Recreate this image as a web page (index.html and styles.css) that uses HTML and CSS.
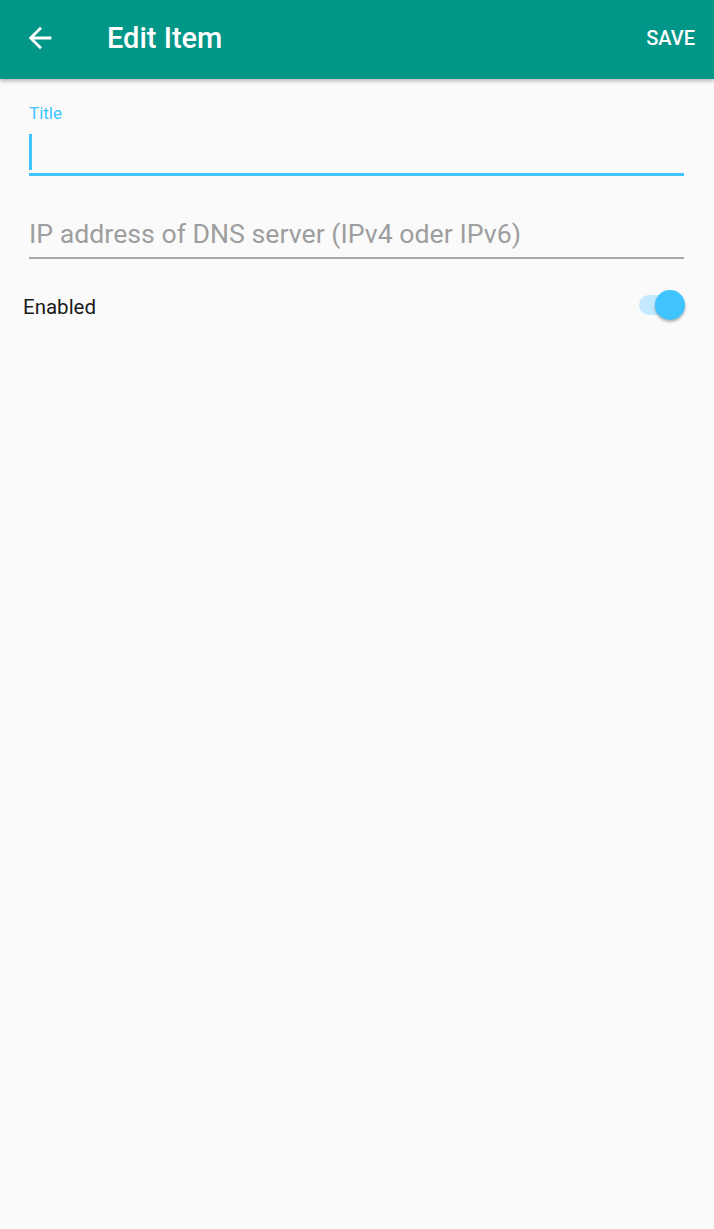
FILE: index.html
```html
<!DOCTYPE html>
<html>
<head>
<meta charset="utf-8">
<link rel="stylesheet" href="styles.css">
</head>
<body>
<header class="toolbar">
  <svg class="back" viewBox="0 0 24 24" width="34" height="34"><path fill="#fff" d="M20 11H7.83l5.59-5.59L12 4l-8 8 8 8 1.41-1.41L7.83 13H20v-2z"/></svg>
  <h1 class="title">Edit Item</h1>
  <span class="save">SAVE</span>
</header>
<main class="form">
  <div class="field field-active">
    <label class="label">Title</label>
    <div class="input"><span class="cursor"></span></div>
  </div>
  <div class="field field-idle">
    <div class="placeholder">IP address of DNS server (IPv4 oder IPv6)</div>
  </div>
</main>
<div class="row">
  <span class="row-label">Enabled</span>
  <span class="switch"><span class="track"></span><span class="thumb"></span></span>
</div>
</body>
</html>
```

FILE: styles.css
```css
html, body {
  margin: 0;
  padding: 0;
  background: #fafafa;
  font-family: Roboto, "Noto Sans", "Liberation Sans", sans-serif;
}
body {
  min-height: 1229px;
}
.toolbar {
  box-sizing: border-box;
  height: 79px;
  padding: 0 19px 3px 23px;
  background: #009688;
  display: flex;
  align-items: center;
  box-shadow: 0 2px 4px rgba(0,0,0,0.28);
  position: relative;
}
.back {
  display: block;
  flex: none;
}
.title {
  margin: 0 0 0 50px;
  font-size: 29px;
  font-weight: 500;
  color: #fff;
  line-height: 34px;
  flex: 1;
}
.save {
  font-size: 20px;
  font-weight: 500;
  color: #fff;
  line-height: 24px;
}
.form {
  padding: 24px 30px 0 29px;
}
.label {
  display: block;
  font-size: 17px;
  line-height: 20px;
  color: #40c4ff;
}
.input {
  height: 39px;
  padding-top: 11px;
  border-bottom: 3px solid #40c4ff;
}
.cursor {
  display: block;
  width: 3px;
  height: 36px;
  background: #40c4ff;
}
.field-idle {
  margin-top: 43px;
}
.placeholder {
  font-size: 26.7px;
  line-height: 30px;
  color: #9e9e9e;
  padding-bottom: 8px;
  border-bottom: 2px solid #a8a8a8;
}
.row {
  margin-top: 31px;
  height: 30px;
  padding: 0 29px 0 23px;
  display: flex;
  align-items: center;
  justify-content: space-between;
}
.row-label {
  font-size: 20.5px;
  line-height: 24px;
  color: #1a1a1a;
  padding-top: 4px;
}
.switch {
  position: relative;
  width: 46px;
  height: 30px;
  display: block;
}
.track {
  position: absolute;
  left: 0;
  top: 5px;
  width: 41px;
  height: 20px;
  border-radius: 10px;
  background: #c3eafe;
}
.thumb {
  position: absolute;
  right: 0;
  top: 0;
  width: 30px;
  height: 30px;
  border-radius: 50%;
  background: #40c4ff;
  box-shadow: 0 2px 3px rgba(0,0,0,0.3);
}
```
